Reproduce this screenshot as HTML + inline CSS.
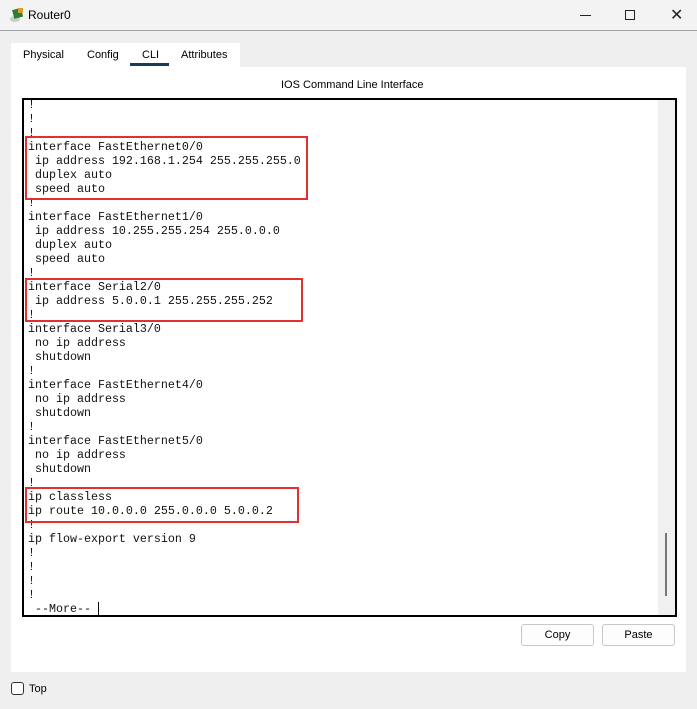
<!DOCTYPE html>
<html><head><style>
*{margin:0;padding:0;box-sizing:border-box}
body{width:697px;height:709px;background:#efefef;position:relative;overflow:hidden;font-family:"Liberation Sans",sans-serif;font-size:11px;color:#000}
.abs{position:absolute}
#title{left:0;top:0;width:697px;height:31px;background:#f3f3f3;border-bottom:1px solid #a0a0a0}
#term{left:22px;top:98px;width:655px;height:519px;border:2px solid #000;background:#fff;overflow:hidden}
pre{position:absolute;left:4px;top:-2px;font-family:"Liberation Mono",monospace;font-size:11.67px;line-height:14px;color:#111}
.red{position:absolute;border:2px solid #e03030}
.btn{background:#fdfdfd;border:1px solid #c8c8c8;border-radius:3px;text-align:center;line-height:20px;font-size:11px}
</style></head><body>
<div id="title" class="abs">
 <svg class="abs" style="left:9px;top:7px" width="16" height="16"><ellipse cx="6" cy="12" rx="5" ry="3" fill="#ccc"/><rect x="4" y="2" width="9" height="9" fill="#2e7d32" transform="rotate(-15 8 6)"/><rect x="9" y="1" width="5" height="5" fill="#d8a030"/></svg>
 <div class="abs" style="left:28px;top:8px;font-size:12px">Router0</div>
 <div class="abs" style="left:580px;top:15px;width:11px;height:1px;background:#222"></div>
 <div class="abs" style="left:625px;top:10px;width:10px;height:10px;border:1px solid #222"></div>
 <div class="abs" style="left:670px;top:5px;font-size:16px;color:#222">✕</div>
</div>
<div class="abs" style="left:11px;top:43px;width:229px;height:25px;background:#fff"></div>
<div class="abs" style="left:11px;top:67px;width:675px;height:605px;background:#fff"></div>
<div class="abs" style="left:23px;top:49px">Physical</div>
<div class="abs" style="left:87px;top:49px">Config</div>
<div class="abs" style="left:142px;top:49px">CLI</div>
<div class="abs" style="left:130px;top:63px;width:39px;height:3px;background:#1c3a5e"></div>
<div class="abs" style="left:181px;top:49px">Attributes</div>
<div class="abs" style="left:281px;top:79px">IOS Command Line Interface</div>
<div id="term" class="abs">
<div class="abs" style="left:634px;top:0;width:17px;height:515px;background:#f0f0f0"></div>
<div class="abs" style="left:641px;top:433px;width:2px;height:63px;background:#777"></div>
<pre>!
!
!
interface FastEthernet0/0
 ip address 192.168.1.254 255.255.255.0
 duplex auto
 speed auto
!
interface FastEthernet1/0
 ip address 10.255.255.254 255.0.0.0
 duplex auto
 speed auto
!
interface Serial2/0
 ip address 5.0.0.1 255.255.255.252
!
interface Serial3/0
 no ip address
 shutdown
!
interface FastEthernet4/0
 no ip address
 shutdown
!
interface FastEthernet5/0
 no ip address
 shutdown
!
ip classless
ip route 10.0.0.0 255.0.0.0 5.0.0.2
!
ip flow-export version 9
!
!
!
!
 --More-- </pre>
<div class="abs" style="left:74px;top:502px;width:1px;height:15px;background:#000"></div>
<div class="red" style="left:1px;top:36px;width:283px;height:64px"></div>
<div class="red" style="left:1px;top:178px;width:278px;height:44px"></div>
<div class="red" style="left:1px;top:387px;width:274px;height:36px"></div>
</div>
<div class="abs btn" style="left:521px;top:624px;width:73px;height:22px">Copy</div>
<div class="abs btn" style="left:602px;top:624px;width:73px;height:22px">Paste</div>
<div class="abs" style="left:11px;top:682px;width:13px;height:13px;border:1px solid #333;border-radius:3px;background:#fff"></div>
<div class="abs" style="left:29px;top:683px">Top</div>
</body></html>
